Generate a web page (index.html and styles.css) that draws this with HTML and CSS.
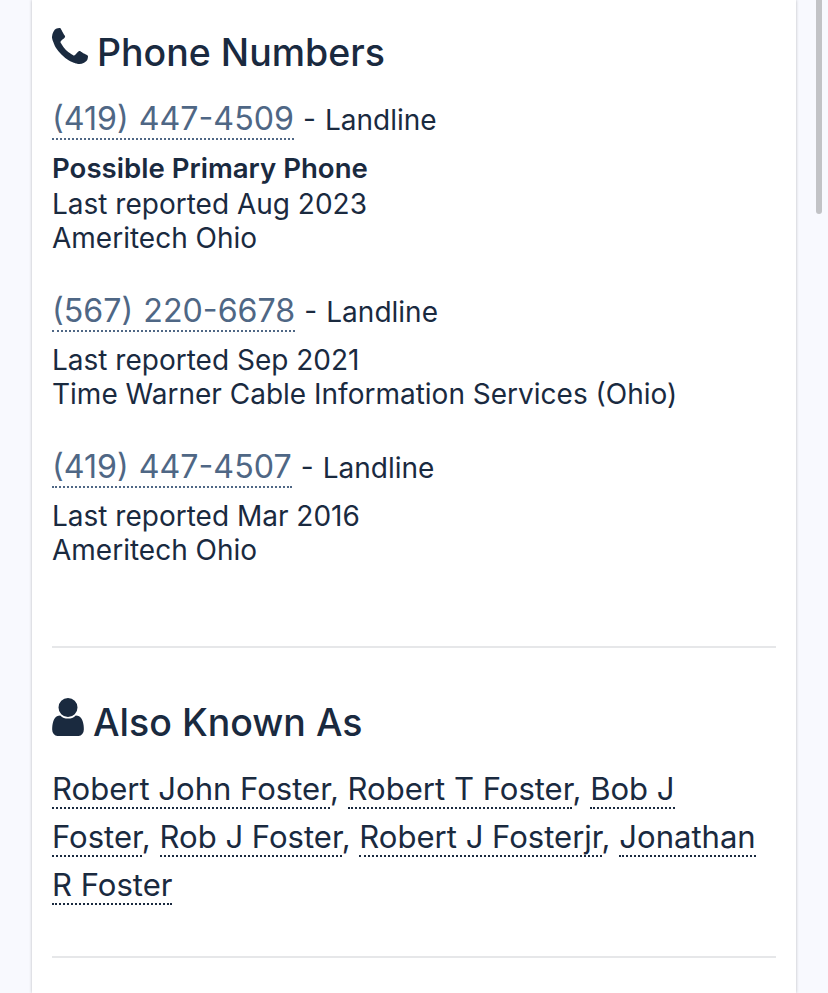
FILE: index.html
```html
<!DOCTYPE html>
<html lang="en">
<head>
<meta charset="utf-8">
<title>Phone Numbers</title>
<link rel="stylesheet" href="styles.css">
</head>
<body>
<main class="card">
  <section class="phones">
    <h2 class="heading">
      <svg class="icon icon-phone" viewBox="192 128 1408 1408" aria-hidden="true"><path d="M1600 1240q0 27-10 70.500t-21 68.500q-21 50-122 106-94 51-186 51-27 0-53-3.500t-57.500-12.500-47-14.500-55.500-20.500-49-18q-98-35-175-83-127-79-264-216t-216-264q-48-77-83-175-3-9-18-49t-20.500-55.500-14.500-47-12.500-57.500-3.500-53q0-92 51-186 56-101 106-122 25-11 68.500-21t70.500-10q14 0 21 3 18 6 53 76 11 19 30 54t35 63.500 31 53.500q3 4 17.500 25t21.500 35.500 7 28.500q0 20-28.500 50t-62 55-62 53-28.500 46q0 9 5 22.500t8.500 20.500 14 24 11.500 19q76 137 174 235t235 174q2 1 19 11.500t24 14 20.500 8.500 22.500 5q18 0 46-28.500t53-62 55-62 50-28.500q14 0 28.500 7t35.500 21.500 25 17.500q25 15 53.500 31t63.500 35 54 30q70 35 76 53 3 7 3 21z"/></svg>
      <span>Phone Numbers</span>
    </h2>
    <div class="phone">
      <div class="phone-line"><a class="tel">(419) 447-4509</a> - Landline</div>
      <div class="detail"><strong class="primary">Possible Primary Phone</strong>Last reported Aug 2023<br>Ameritech Ohio</div>
    </div>
    <div class="phone">
      <div class="phone-line"><a class="tel">(567) 220-6678</a> - Landline</div>
      <div class="detail">Last reported Sep 2021<br>Time Warner Cable Information Services (Ohio)</div>
    </div>
    <div class="phone">
      <div class="phone-line"><a class="tel">(419) 447-4507</a> - Landline</div>
      <div class="detail">Last reported Mar 2016<br>Ameritech Ohio</div>
    </div>
  </section>
  <hr class="rule">
  <section class="aka">
    <h2 class="heading">
      <svg class="icon icon-person" viewBox="256 128 1280 1536" aria-hidden="true"><path d="M1536 1399q0 109-62.500 187t-150.500 78h-854q-88 0-150.500-78t-62.500-187q0-85 8.500-160.500t31.500-152 58.500-131 94-89 134.500-34.500q131 128 313 128t313-128q76 0 134.500 34.500t94 89 58.500 131 31.500 152 8.500 160.500zm-256-887q0 159-112.500 271.500t-271.500 112.500-271.500-112.500-112.500-271.500 112.500-271.500 271.500-112.500 271.500 112.500 112.500 271.500z"/></svg>
      <span>Also Known As</span>
    </h2>
    <p class="names"><a class="name">Robert John Foster</a>, <a class="name">Robert T Foster</a>, <a class="name">Bob J Foster</a>, <a class="name">Rob J Foster</a>, <a class="name">Robert J Fosterjr</a>, <a class="name">Jonathan R Foster</a></p>
  </section>
  <hr class="rule">
</main>
<div class="scrollbar"></div>
</body>
</html>
```
FILE: styles.css
```css
html, body {
  margin: 0;
  height: 100%;
  overflow: hidden;
}
body {
  background: #f8f9fe;
  font-family: Inter, "Liberation Sans", sans-serif;
  color: #1a2a3f;
  position: relative;
}
.card {
  box-sizing: border-box;
  width: 764px;
  height: 993px;
  margin-left: 32px;
  padding: 0 20px;
  background: #fff;
  box-shadow: 0 0 3px rgba(0, 0, 0, .25);
  overflow: hidden;
}
.phones {
  padding-top: 26px;
  height: 646px;
  box-sizing: border-box;
}
.heading {
  display: flex;
  align-items: flex-start;
  margin: 0 0 15px;
  font-size: 37.5px;
  line-height: 54px;
  font-weight: 500;
  color: #1a2a3f;
}
.icon {
  fill: #1a2a3f;
  flex: none;
}
.icon-phone {
  width: 36px;
  height: 36px;
  margin: 2px 9px 0 0;
}
.icon-person {
  width: 32px;
  height: 38px;
  margin: 2px 9px 0 0;
}
.phone {
  margin-bottom: 32px;
}
.phone-line {
  font-size: 28px;
  line-height: 48px;
  word-spacing: 1.2px;
}
.tel {
  font-size: 32.2px;
  word-spacing: 1px;
  color: #4f6785;
  border-bottom: 2px dotted #4f6785;
}
.detail {
  font-size: 28px;
  line-height: 34px;
  margin-top: 7px;
}
.primary {
  display: block;
  margin-bottom: 2px;
  font-size: 27.6px;
  font-weight: 600;
}
.rule {
  height: 2px;
  margin: 0;
  border: 0;
  background: #e6e7e9;
}
.aka {
  box-sizing: border-box;
  height: 308px;
  padding-top: 48px;
}
.aka .heading {
  margin-bottom: 0;
}
.names {
  margin: 15px 0 0;
  font-size: 31.05px;
  line-height: 48px;
}
.name {
  border-bottom: 2px dotted #1a2a3f;
}
.scrollbar {
  position: absolute;
  top: 0;
  left: 816px;
  width: 6px;
  height: 214px;
  border-radius: 0 0 3px 3px;
  background: #c2c3c6;
}
```
